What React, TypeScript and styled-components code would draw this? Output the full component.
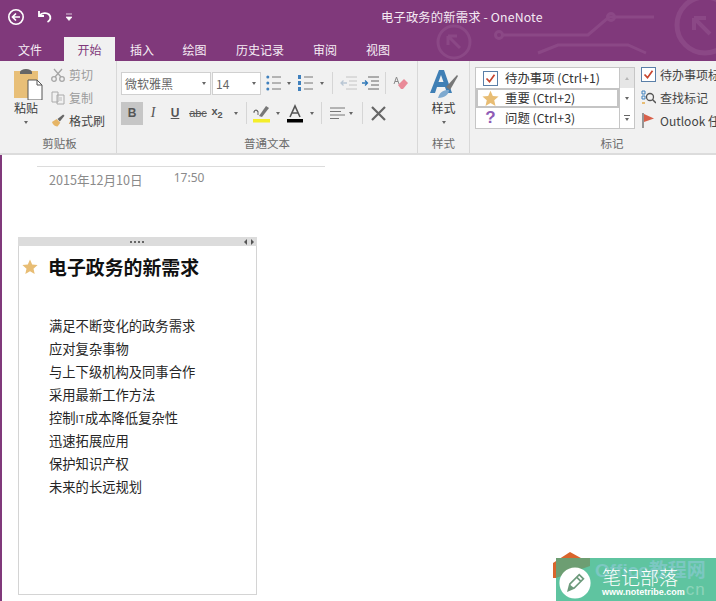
import React from 'react';
import styled, { createGlobalStyle } from 'styled-components';

const CJK = `"Noto Sans CJK SC", "Noto Sans", sans-serif`;

const GlobalStyle = createGlobalStyle`
  html, body { margin: 0; padding: 0; background: #fff; }
  body { width: 716px; height: 601px; overflow: hidden; font-family: ${CJK}; }
`;

const Page = styled.div`
  position: relative;
  width: 716px;
  height: 601px;
  overflow: hidden;
  display: flex;
  flex-direction: column;
`;

const Header = styled.header`
  position: relative;
  height: 61px;
  flex: none;
  background: #80397b;
  overflow: hidden;
`;

const HeaderArt = styled.svg`
  position: absolute;
  left: 400px;
  top: 0;
`;

const TitleRow = styled.div`
  position: relative;
  height: 37px;
  display: flex;
  align-items: center;
  padding: 0 0 4px 7px;
  box-sizing: border-box;
`;

const QuickIcons = styled.div`
  display: flex;
  align-items: center;
  gap: 13px;
  width: 374px;
  flex: none;
`;

const Title = styled.div`
  color: #f4e9f3;
  font-size: 12.3px;
  letter-spacing: 0.15px;
  white-space: nowrap;
`;

const Tabs = styled.nav`
  position: relative;
  height: 24px;
  display: flex;
  padding-left: 5px;
`;

const Tab = styled.div<{ $active?: boolean; $w: number; $mr?: number }>`
  width: ${({ $w }) => $w}px;
  margin-right: ${({ $mr }) => $mr ?? 0}px;
  height: 24px;
  display: flex;
  align-items: center;
  justify-content: center;
  font-size: 12px;
  color: ${({ $active }) => ($active ? '#80397b' : '#f6eef5')};
  background: ${({ $active }) => ($active ? '#f1f1f1' : 'transparent')};
`;

const Ribbon = styled.div`
  height: 94px;
  background: #f1f1f1;
  border-bottom: 2px solid #dcdcdc;
  display: flex;
  padding-left: 3px;
  box-sizing: border-box;
  flex: none;
`;

const Group = styled.section<{ $w: number; $line?: boolean }>`
  width: ${({ $w }) => $w}px;
  flex: none;
  display: flex;
  flex-direction: column;
  box-sizing: border-box;
  border-right: ${({ $line }) => ($line ? '1px solid #d8d8d8' : 'none')};
`;

const GroupBody = styled.div`
  height: 74px;
  flex: none;
  display: flex;
`;

const GroupLabel = styled.div`
  height: 17px;
  line-height: 17px;
  text-align: center;
  font-size: 11.5px;
  color: #6a6a6a;
`;

const BigButton = styled.div<{ $w: number; $ml?: number }>`
  width: ${({ $w }) => $w}px;
  margin-left: ${({ $ml }) => $ml ?? 0}px;
  flex: none;
  display: flex;
  flex-direction: column;
  align-items: center;
  padding-top: 7px;
  font-size: 12px;
  color: #3b3b3b;
  line-height: 16px;
`;

const PasteIcon = styled.svg`
  margin-left: 4px;
`;

const SmallColumn = styled.div`
  display: flex;
  flex-direction: column;
  padding-top: 2px;
  margin-left: 8px;
`;

const SmallRow = styled.div<{ $muted?: boolean }>`
  height: 23px;
  display: flex;
  align-items: center;
  gap: 4px;
  font-size: 12px;
  white-space: nowrap;
  color: ${({ $muted }) => ($muted ? '#9b9b9b' : '#444')};
`;

const FontColumn = styled.div`
  display: flex;
  flex-direction: column;
  gap: 8px;
  padding: 11px 0 0 4px;
`;

const ToolRow = styled.div`
  display: flex;
  align-items: center;
  height: 22px;
`;

const Select = styled.div<{ $w: number }>`
  width: ${({ $w }) => $w}px;
  height: 23px;
  box-sizing: border-box;
  background: #fff;
  border: 1px solid #d0d0d0;
  margin-right: 1px;
  padding: 0 4px 0 3px;
  display: flex;
  align-items: center;
  justify-content: space-between;
  font-size: 12px;
  color: #666;
`;

const Caret = styled.span<{ $ml?: number; $mt?: number; $up?: boolean }>`
  width: 0;
  height: 0;
  flex: none;
  margin-left: ${({ $ml }) => $ml ?? 0}px;
  margin-top: ${({ $mt }) => $mt ?? 0}px;
  border-left: 2.5px solid transparent;
  border-right: 2.5px solid transparent;
  border-top: ${({ $up }) => ($up ? 'none' : '3px solid #666')};
  border-bottom: ${({ $up }) => ($up ? '3px solid #b5b5b5' : 'none')};
`;

const Tool = styled.div<{ $w: number; $on?: boolean }>`
  width: ${({ $w }) => $w}px;
  height: 23px;
  flex: none;
  display: flex;
  align-items: center;
  justify-content: center;
  background: ${({ $on }) => ($on ? '#c6c6c6' : 'transparent')};
  color: #555;
`;

const Glyph = styled.span<{ $b?: boolean; $i?: boolean; $u?: boolean; $s?: number; $strike?: boolean }>`
  font-family: "Liberation Serif", serif;
  font-size: ${({ $s }) => $s ?? 12}px;
  font-weight: ${({ $b }) => ($b ? 700 : 400)};
  font-style: ${({ $i }) => ($i ? 'italic' : 'normal')};
  text-decoration: ${({ $u, $strike }) => ($u ? 'underline' : $strike ? 'line-through' : 'none')};
`;

const SansGlyph = styled(Glyph)`
  font-family: "Liberation Sans", sans-serif;
`;

const QuestionMark = styled(SansGlyph)`
  color: #8e5bb5;
`;

const Divider = styled.span<{ $ml: number }>`
  width: 1px;
  height: 22px;
  flex: none;
  background: #d6d6d6;
  margin: 0 3px 0 ${({ $ml }) => $ml}px;
`;

const TagGallery = styled.div`
  margin: 6px 0 0 5px;
  width: 160px;
  height: 62px;
  flex: none;
  display: flex;
  box-sizing: border-box;
  background: #fff;
  border: 1px solid #c6c6c6;
`;

const TagList = styled.div`
  flex: 1;
  display: flex;
  flex-direction: column;
`;

const TagRow = styled.div<{ $on?: boolean }>`
  height: 20px;
  box-sizing: border-box;
  display: flex;
  align-items: center;
  font-size: 12.4px;
  color: #333;
  white-space: nowrap;
  outline: ${({ $on }) => ($on ? '2px solid #c4c4c4' : 'none')};
  outline-offset: -2px;
`;

const TagIcon = styled.span`
  width: 29px;
  flex: none;
  display: flex;
  justify-content: center;
`;

const GalleryScroll = styled.div`
  width: 14px;
  flex: none;
  display: flex;
  flex-direction: column;
  border-left: 1px solid #c6c6c6;
`;

const ScrollCell = styled.div<{ $off?: boolean; $rule?: boolean }>`
  flex: 1;
  display: flex;
  flex-direction: column;
  gap: 2px;
  align-items: center;
  justify-content: center;
  background: ${({ $off }) => ($off ? '#e6e6e6' : '#fff')};
  &::before {
    content: '';
    display: ${({ $rule }) => ($rule ? 'block' : 'none')};
    width: 6px;
    height: 1px;
    background: #666;
  }
`;

const TagActions = styled.div`
  display: flex;
  flex-direction: column;
  flex: none;
  margin: 2px 0 0 6px;
`;

const TagAction = styled.div`
  height: 23px;
  display: flex;
  align-items: center;
  gap: 4px;
  font-size: 12px;
  color: #444;
  white-space: nowrap;
`;

const Content = styled.main`
  flex: 1;
  border-left: 2px solid #80397b;
  background: #fff;
  padding: 11px 0 0 16px;
  box-sizing: border-box;
  min-height: 0;
`;

const DateBlock = styled.div`
  width: 276px;
  margin-left: 19px;
  padding-left: 12px;
  border-top: 1px solid #dcdcdc;
  display: flex;
  color: #8a8a8a;
  height: 70px;
`;

const DateText = styled.span`
  font-size: 12.6px;
  margin-top: 4px;
  line-height: 18px;
  white-space: nowrap;
`;

const TimeText = styled.span`
  font-size: 12px;
  margin: 2px 0 0 31px;
  line-height: 18px;
  font-family: "Noto Sans", sans-serif;
`;

const Note = styled.article`
  width: 239px;
  height: 358px;
  box-sizing: border-box;
  border: 1px solid #d4d4d4;
  border-top: none;
`;

const NoteBar = styled.div`
  height: 9px;
  background: #dcdcdc;
  display: flex;
  align-items: center;
  margin: 0 -1px;
`;

const Dots = styled.span`
  display: flex;
  gap: 2px;
  margin-left: 112px;
`;

const Dot = styled.i`
  width: 2px;
  height: 2px;
  background: #666;
  display: block;
`;

const Arrows = styled.span`
  display: flex;
  gap: 4px;
  margin: 0 3px 0 auto;
`;

const Arrow = styled.i<{ $right?: boolean }>`
  width: 0;
  height: 0;
  display: block;
  border-top: 3px solid transparent;
  border-bottom: 3px solid transparent;
  border-left: ${({ $right }) => ($right ? '3px solid #555' : 'none')};
  border-right: ${({ $right }) => ($right ? 'none' : '3px solid #555')};
`;

const HeadingRow = styled.div`
  display: flex;
  align-items: center;
  padding: 7px 0 0 3px;
  height: 28px;
`;

const Heading = styled.h1`
  margin: 0 0 0 10px;
  font-size: 18.9px;
  font-weight: 700;
  line-height: 28px;
  color: #111;
  white-space: nowrap;
`;

const Items = styled.ul`
  list-style: none;
  margin: 33px 0 0 30px;
  padding: 0;
`;

const Item = styled.li`
  height: 23px;
  line-height: 23px;
  font-size: 13.3px;
  color: #262626;
  white-space: nowrap;
`;

const SmallLatin = styled.span`
  font-size: 10.5px;
`;

const LogoCorner = styled.svg`
  position: absolute;
  left: 553px;
  top: 552px;
`;

const Watermark = styled.div`
  position: absolute;
  left: 556px;
  top: 558px;
  width: 160px;
  height: 43px;
  background: #5fc4a0;
  overflow: hidden;
`;

const WatermarkShade = styled.svg`
  position: absolute;
  left: 0;
  top: 0;
`;

const WatermarkGhost = styled.span`
  position: absolute;
  left: 39px;
  top: -3px;
  font: 700 19px "Liberation Sans", ${CJK};
  color: #7cc8c2;
  white-space: nowrap;
`;

const WatermarkGhostLow = styled.span`
  position: absolute;
  left: 124px;
  top: 22px;
  font: 400 17px "Liberation Sans", sans-serif;
  color: #8dd4ba;
  letter-spacing: 1px;
`;

const WatermarkTitle = styled.span`
  position: absolute;
  left: 46px;
  top: 8px;
  font-size: 19px;
  line-height: 22px;
  font-weight: 300;
  color: #fff;
  white-space: nowrap;
`;

const WatermarkUrl = styled.span`
  position: absolute;
  left: 46px;
  top: 29px;
  font: 700 9px "Liberation Sans", sans-serif;
  color: #fff;
  white-space: nowrap;
`;

const LogoDisc = styled.svg`
  position: absolute;
  left: 559px;
  top: 567px;
`;

const Star = ({ size = 16 }: { size?: number }) => (
  <svg width={size} height={size} viewBox="0 0 16 16">
    <path d="M8 .6l2.2 5 5.4.5-4.1 3.6 1.2 5.4L8 12.2l-4.7 2.9 1.2-5.4L.4 6.1l5.4-.5z" fill="#e8bd74" />
  </svg>
);

const CheckBox = ({ size = 15 }: { size?: number }) => (
  <svg width={size} height={size} viewBox="0 0 15 15">
    <rect x=".5" y=".5" width="14" height="14" fill="#fff" stroke="#5a7fa8" />
    <path d="M3.500 7.500l3 3.200 5-7" fill="none" stroke="#c8452f" strokeWidth="1.7" />
  </svg>
);

const ListIcon = ({ numbered }: { numbered?: boolean }) => (
  <svg width="15" height="18" viewBox="0 0 15 18">
    {[3, 9, 15].map((y) => (
      <g key={y}>
        {numbered ? (
          <rect x="0" y={y - 2} width="3" height="4" fill="#3f80bd" />
        ) : (
          <circle cx="1.8" cy={y} r="1.5" fill="#3f80bd" />
        )}
        <path d={`M6 ${y}h9`} stroke="#777" />
      </g>
    ))}
  </svg>
);

const IndentIcon = ({ active }: { active?: boolean }) => (
  <svg width="17" height="14" viewBox="0 0 17 14">
    <path d="M6 1h11M9 5h8M9 9h8M6 13h11" stroke={active ? '#666' : '#c4c4c4'} />
    {active ? (
      <path d="M0 7h5M3 4.500L5.500 7 3 9.500" fill="none" stroke="#2f78b8" strokeWidth="1.3" />
    ) : (
      <path d="M7 7H1M3.500 4.500L1 7l2.500 2.500" fill="none" stroke="#b9c6d4" strokeWidth="1.3" />
    )}
  </svg>
);

const App = () => (
  <Page>
    <GlobalStyle />
    <Header>
      <HeaderArt width="316" height="61" viewBox="0 0 316 61">
        <g fill="none" stroke="#8b4886" strokeWidth="3">
          <circle cx="54" cy="42" r="16" />
          <path d="M48 36l12 12M48 36h9M48 36v9" />
          <circle cx="99" cy="35" r="3.500" />
          <path d="M103 35h85l21-18h45M138 53l20-8h70l18 8" />
          <circle cx="211" cy="17" r="3.500" />
          <circle cx="305" cy="25" r="28" strokeWidth="5" />
          <path d="M294 18l16 16M294 18h12M294 18v12" strokeWidth="4" />
        </g>
      </HeaderArt>
      <TitleRow>
        <QuickIcons>
          <svg width="18" height="18" viewBox="0 0 18 18">
            <circle cx="9" cy="9" r="7.200" fill="none" stroke="#fff" strokeWidth="1.6" />
            <path d="M13 9H6M9 5.500L5.500 9 9 12.500" fill="none" stroke="#fff" strokeWidth="1.7" />
          </svg>
          <svg width="15" height="15" viewBox="0 0 15 15">
            <path d="M1 2v5h5" fill="none" stroke="#fff" strokeWidth="1.8" />
            <path d="M1.500 6.500C4 3.500 9 3.500 11 5.500c2.500 2.500 1.500 6-1.500 7.500" fill="none" stroke="#fff" strokeWidth="1.9" />
          </svg>
          <svg width="6" height="8" viewBox="0 0 6 8">
            <path d="M0 1h6M0 4h6l-3 3.500z" fill="#fff" stroke="#fff" strokeWidth=".7" />
          </svg>
        </QuickIcons>
        <Title>电子政务的新需求 - OneNote</Title>
      </TitleRow>
      <Tabs>
        <Tab $w={50} $mr={9}>文件</Tab>
        <Tab $w={51} $active>开始</Tab>
        <Tab $w={54}>插入</Tab>
        <Tab $w={51}>绘图</Tab>
        <Tab $w={80}>历史记录</Tab>
        <Tab $w={50}>审阅</Tab>
        <Tab $w={56}>视图</Tab>
      </Tabs>
    </Header>

    <Ribbon>
      <Group $w={114} $line>
        <GroupBody>
          <BigButton $w={34} $ml={6}>
            <PasteIcon width="30" height="32" viewBox="0 0 30 32">
              <rect x="1" y="3" width="24" height="27" fill="#e8bf78" />
              <path d="M7 4a6 3 0 0 1 12 0v2H7z" fill="#666" />
              <path d="M15 12h9l5 5v15H15z" fill="#fff" stroke="#555" />
              <path d="M24 12v5h5" fill="none" stroke="#555" />
            </PasteIcon>
            粘贴
            <Caret $mt={5} />
          </BigButton>
          <SmallColumn>
            <SmallRow $muted>
              <svg width="14" height="14" viewBox="0 0 14 14">
                <path d="M3 1l7 8M11 1L4 9" stroke="#a6a6a6" strokeWidth="1.300" />
                <circle cx="3" cy="11" r="2.300" fill="none" stroke="#a6a6a6" strokeWidth="1.300" />
                <circle cx="11" cy="11" r="2.300" fill="none" stroke="#a6a6a6" strokeWidth="1.300" />
              </svg>
              剪切
            </SmallRow>
            <SmallRow $muted>
              <svg width="14" height="14" viewBox="0 0 14 14">
                <path d="M1 1h6v10H1zM6 4h7v9H6z" fill="#f1f1f1" stroke="#aaa" />
                <path d="M8 7h3M8 9h3" stroke="#bbb" />
              </svg>
              复制
            </SmallRow>
            <SmallRow>
              <svg width="14" height="15" viewBox="0 0 15 15">
                <path d="M1 9l5-3 4 4-3 4C5 14 2 12 1 9z" fill="#e6b566" />
                <path d="M7 6l6-5 1.500 1.500-5 6z" fill="#666" />
              </svg>
              格式刷
            </SmallRow>
          </SmallColumn>
        </GroupBody>
        <GroupLabel>剪贴板</GroupLabel>
      </Group>

      <Group $w={301} $line>
        <GroupBody>
          <FontColumn>
            <ToolRow>
              <Select $w={90}>微软雅黑<Caret /></Select>
              <Select $w={49}>14<Caret /></Select>
              <Tool $w={22}><ListIcon /></Tool>
              <Caret $ml={3} />
              <Tool $w={28}><ListIcon numbered /></Tool>
              <Caret $ml={1} />
              <Divider $ml={8} />
              <Tool $w={24}><IndentIcon /></Tool>
              <Tool $w={20}><IndentIcon active /></Tool>
              <Divider $ml={5} />
              <Tool $w={24}>
                <svg width="16" height="16" viewBox="0 0 16 16">
                  <path d="M5 10l6-6 4 4-5 6H8z" fill="#e98a98" />
                  <path d="M1 9l2.500-7L6 9M2 6.500h3" fill="none" stroke="#8a8a8a" />
                </svg>
              </Tool>
            </ToolRow>
            <ToolRow>
              <Tool $w={22} $on><SansGlyph $b $s={12}>B</SansGlyph></Tool>
              <Tool $w={20}><Glyph $i $s={14}>I</Glyph></Tool>
              <Tool $w={24}><SansGlyph $b $u $s={12}>U</SansGlyph></Tool>
              <Tool $w={22}><SansGlyph $strike $s={11}>abc</SansGlyph></Tool>
              <Tool $w={16}><SansGlyph $b $s={11}>x<sub>2</sub></SansGlyph></Tool>
              <Caret $ml={9} />
              <Divider $ml={8} />
              <Tool $w={24}>
                <svg width="18" height="19" viewBox="0 0 18 19">
                  <path d="M6 12l7-10 3 2-7 9z" fill="#777" />
                  <path d="M1 8a2 2 0 1 1 4 0v3M5 8a2 2 0 1 0-4 1" fill="none" stroke="#666" />
                  <rect x="0" y="15" width="17" height="3.500" fill="#f4ee2a" />
                </svg>
              </Tool>
              <Caret $ml={2} />
              <Tool $w={30}>
                <svg width="16" height="19" viewBox="0 0 16 19">
                  <path d="M3 13L8 2l5 11M5 9h6" fill="none" stroke="#555" strokeWidth="1.600" />
                  <rect x="0" y="15" width="16" height="3.500" fill="#000" />
                </svg>
              </Tool>
              <Caret />
              <Divider $ml={7} />
              <Tool $w={24}>
                <svg width="15" height="12" viewBox="0 0 15 12">
                  <path d="M0 1h15M0 4.500h11M0 8h15M0 11.500h9" stroke="#777" />
                </svg>
              </Tool>
              <Caret />
              <Divider $ml={9} />
              <Tool $w={24}>
                <svg width="15" height="15" viewBox="0 0 15 15">
                  <path d="M1 1l13 13M14 1L1 14" stroke="#666" strokeWidth="2.200" />
                </svg>
              </Tool>
            </ToolRow>
          </FontColumn>
        </GroupBody>
        <GroupLabel>普通文本</GroupLabel>
      </Group>

      <Group $w={52} $line>
        <GroupBody>
          <BigButton $w={51}>
            <svg width="30" height="32" viewBox="0 0 30 32">
              <path d="M1 25L10 2h5l8 23h-5l-2-6H8l-2 6zM9.500 14h5l-2.500-7z" fill="#3f7fb5" />
              <path d="M17 19L28 7l1 1-8 14z" fill="#777" />
              <path d="M9 30c2-7 6-8 11-8 0 4-4 8-11 8z" fill="#7da9cf" />
            </svg>
            样式
            <Caret $mt={5} />
          </BigButton>
        </GroupBody>
        <GroupLabel>样式</GroupLabel>
      </Group>

      <Group $w={284}>
        <GroupBody>
          <TagGallery>
            <TagList>
              <TagRow><TagIcon><CheckBox /></TagIcon>待办事项 (Ctrl+1)</TagRow>
              <TagRow $on><TagIcon><Star size={17} /></TagIcon>重要 (Ctrl+2)</TagRow>
              <TagRow><TagIcon><QuestionMark $b $s={17}>?</QuestionMark></TagIcon>问题 (Ctrl+3)</TagRow>
            </TagList>
            <GalleryScroll>
              <ScrollCell $off><Caret $up /></ScrollCell>
              <ScrollCell><Caret /></ScrollCell>
              <ScrollCell $rule><Caret /></ScrollCell>
            </GalleryScroll>
          </TagGallery>
          <TagActions>
            <TagAction><CheckBox />待办事项标记</TagAction>
            <TagAction>
              <svg width="15" height="15" viewBox="0 0 15 15">
                <path d="M1 1h3v3H1zM1 6h3v3H1z" fill="none" stroke="#3f80bd" />
                <circle cx="9" cy="7" r="3.500" fill="none" stroke="#555" strokeWidth="1.300" />
                <path d="M11.500 9.500L15 13" stroke="#555" strokeWidth="1.500" />
                <path d="M1 12h3v2H1z" fill="#e8bd74" />
              </svg>
              查找标记
            </TagAction>
            <TagAction>
              <svg width="15" height="15" viewBox="0 0 15 15">
                <path d="M2 0v15" stroke="#666" strokeWidth="1.300" />
                <path d="M3 1l10 4.500L3 9z" fill="#d8604a" />
              </svg>
              Outlook 任务
            </TagAction>
          </TagActions>
        </GroupBody>
        <GroupLabel>标记</GroupLabel>
      </Group>
    </Ribbon>

    <Content>
      <DateBlock>
        <DateText>2015年12月10日</DateText>
        <TimeText>17:50</TimeText>
      </DateBlock>
      <Note>
        <NoteBar>
          <Dots><Dot /><Dot /><Dot /><Dot /></Dots>
          <Arrows><Arrow /><Arrow $right /></Arrows>
        </NoteBar>
        <HeadingRow>
          <Star />
          <Heading>电子政务的新需求</Heading>
        </HeadingRow>
        <Items>
          <Item>满足不断变化的政务需求</Item>
          <Item>应对复杂事物</Item>
          <Item>与上下级机构及同事合作</Item>
          <Item>采用最新工作方法</Item>
          <Item>控制<SmallLatin>IT</SmallLatin>成本降低复杂性</Item>
          <Item>迅速拓展应用</Item>
          <Item>保护知识产权</Item>
          <Item>未来的长远规划</Item>
        </Items>
      </Note>
    </Content>

    <LogoCorner width="38" height="26" viewBox="0 0 38 26">
      <path d="M0 11L17 0l20 11v15H0z" fill="#d9652c" />
    </LogoCorner>
    <Watermark>
      <WatermarkShade width="36" height="24" viewBox="0 0 36 24">
        <path d="M0 0h34v8L0 20z" fill="#6d9e72" />
      </WatermarkShade>
      <WatermarkGhost>Office教程网</WatermarkGhost>
      <WatermarkGhostLow>.cn</WatermarkGhostLow>
      <WatermarkTitle>笔记部落</WatermarkTitle>
      <WatermarkUrl>www.notetribe.com</WatermarkUrl>
    </Watermark>
    <LogoDisc width="32" height="32" viewBox="0 0 38 38">
      <circle cx="19" cy="19" r="18.500" fill="#fff" />
      <path d="M11 28l2-8L24 9l5 5-11 11z" fill="none" stroke="#6d9a7c" strokeWidth="2" />
      <path d="M11 28l2-7 5 4z" fill="#6d9a7c" />
      <path d="M21 12l5 5" stroke="#6d9a7c" strokeWidth="2" />
    </LogoDisc>
  </Page>
);

export default App;
